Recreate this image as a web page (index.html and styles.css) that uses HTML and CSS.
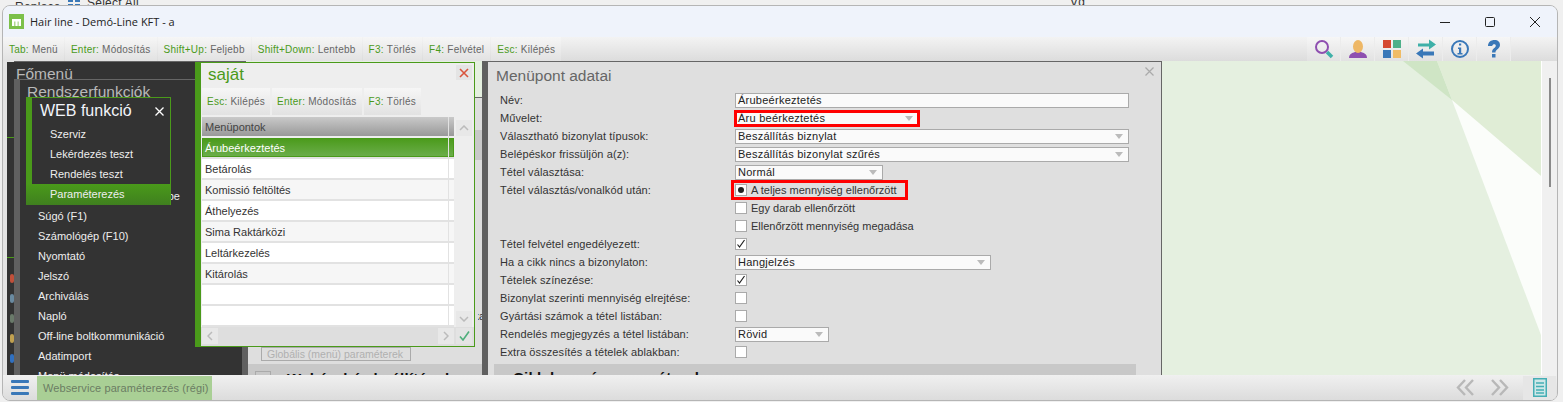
FILE: index.html
```html
<!DOCTYPE html>
<html lang="hu">
<head>
<meta charset="utf-8">
<title>Hair line - Demó-Line KFT - a</title>
<link rel="stylesheet" href="styles.css">
</head>
<body>
<div class="behind">
  <span class="b-replace">Replace</span>
  <svg class="b-grid" width="12" height="6" viewBox="0 0 12 6"><path d="M0 0h5v2H0zM7 0h5v2H7zM0 4h5v2H0zM7 4h5v2H7z" fill="#3a78b8"/></svg>
  <span class="b-select">Select All</span>
  <span class="b-vg">Vg</span>
</div>
<div class="window">
  <header class="titlebar">
    <svg class="logo" width="15" height="15" viewBox="0 0 15 15"><rect width="15" height="15" fill="#7cc04a"/><path d="M3 12V5h9v7h-2.500V7.500H8.700V12H6.300V7.500H5.400V12z" fill="#fff"/></svg>
    <span class="apptitle">Hair line - Demó-Line KFT - a</span>
    <div class="winctl">
      <svg width="10" height="10" viewBox="0 0 10 10"><path d="M0 5.500h10" stroke="#222" stroke-width="1"/></svg>
      <svg width="10" height="10" viewBox="0 0 10 10"><rect x=".5" y=".5" width="9" height="9" rx="1" fill="none" stroke="#222"/></svg>
      <svg width="10" height="10" viewBox="0 0 10 10"><path d="M0 0l10 10M10 0L0 10" stroke="#222"/></svg>
    </div>
  </header>
  <nav class="toolbar">
    <div class="keys">
      <span class="key"><b>Tab:</b> Menü</span>
      <span class="key"><b>Enter:</b> Módosítás</span>
      <span class="key"><b>Shift+Up:</b> Feljebb</span>
      <span class="key"><b>Shift+Down:</b> Lentebb</span>
      <span class="key"><b>F3:</b> Törlés</span>
      <span class="key"><b>F4:</b> Felvétel</span>
      <span class="key"><b>Esc:</b> Kilépés</span>
    </div>
    <div class="tools">
      <span class="tool"><svg width="20" height="20" viewBox="0 0 20 20"><circle cx="8" cy="8" r="6" fill="none" stroke="#8e4fb0" stroke-width="2"/><path d="M13 13l5 5" stroke="#3eb0a8" stroke-width="3.500"/></svg></span>
      <span class="tool"><svg width="20" height="20" viewBox="0 0 20 20"><path d="M1 19c0-4 3-5 6-6h6c3 1 6 2 6 6z" fill="#8e4fb0"/><ellipse cx="10" cy="7.500" rx="5" ry="6.500" fill="#eeb765"/></svg></span>
      <span class="tool"><svg width="20" height="20" viewBox="0 0 20 20"><rect x="1" y="1" width="8" height="8" fill="#d5482f"/><rect x="11" y="1" width="8" height="8" fill="#4fb08a"/><rect x="1" y="11" width="8" height="8" fill="#3a78b8"/><rect x="11" y="11" width="8" height="8" fill="#f0bc66"/></svg></span>
      <span class="tool"><svg width="20" height="20" viewBox="0 0 20 20"><path d="M2 5h11V1l7 5-7 5V8H2z" fill="#3eb0a8" transform="translate(0 -.5)"/><path d="M18 12H7V9L0 14l7 5v-3h11z" fill="#3a78b8" transform="translate(0 .5)"/></svg></span>
      <span class="tool"><svg width="20" height="20" viewBox="0 0 20 20"><circle cx="10" cy="10" r="8" fill="none" stroke="#3a78b8" stroke-width="2"/><path d="M9 4.500h2.200v2H9zM8 8.500h3.200V14H12.500v1.500h-5V14H9V10H8z" fill="#3a78b8"/></svg></span>
      <span class="tool"><svg width="20" height="20" viewBox="0 0 20 20"><path d="M4 7c0-4 3-6 6.500-6S16 3 16 6c0 4-4.500 4-4.500 7.500H8C8 9 12 9 11.800 6.500 11.500 4.500 8.500 4.800 8.200 7z" fill="#3a78b8"/><rect x="8" y="15" width="3.500" height="3.500" fill="#3a78b8"/></svg></span>
    </div>
  </nav>
  <main class="workspace">
    <div class="canvas">
      <svg class="pattern" width="1538" height="314" viewBox="0 0 1538 314" aria-hidden="true">
        <path d="M1400 0h34l15 39z" fill="#cfe5c5"/>
        <path d="M1434 0h104v115l-89-76z" fill="#e0edd6"/>
        <path d="M1449 39l89 76v159z" fill="#fbfdfa"/>
      </svg>

      <section class="panel-main"><h2 class="menu-head">Főmenü</h2></section>

      <div class="sidestrip">
        <i class="tick t1"></i><i class="tick t2"></i>
        <i class="dot d1"></i><i class="dot d2"></i><i class="dot d3"></i><i class="dot d4"></i><i class="dot d5"></i>
      </div>

      <section class="panel-sys">
        <h2 class="menu-head sys-head">Rendszerfunkciók</h2>
        <ul class="menu">
          <li>Felhasználói beállítások, típe</li>
          <li>Súgó (F1)</li>
          <li>Számológép (F10)</li>
          <li>Nyomtató</li>
          <li>Jelszó</li>
          <li>Archiválás</li>
          <li>Napló</li>
          <li>Off-line boltkommunikáció</li>
          <li>Adatimport</li>
          <li>Menü módosítás</li>
        </ul>
      </section>

      <section class="panel-params">
        <div class="params-top"></div>
        <div class="params-band"></div>
        <div class="params-rest"></div>
        <span class="ghost-btn">Globális (menü) paraméterek</span>
        <div class="params-bar"><i class="ghost-check"></i><b>Webáruház beállítások</b></div>
        <span class="params-ka">ka</span>
      </section>

      <section class="panel-web">
        <div class="web-head"><span>WEB funkció</span><svg width="9" height="9" viewBox="0 0 9 9"><path d="M.5.500l8 8M8.500.500l-8 8" stroke="#fff" stroke-width="1.300"/></svg></div>
        <ul class="web-menu">
          <li>Szerviz</li>
          <li>Lekérdezés teszt</li>
          <li>Rendelés teszt</li>
          <li class="on">Paraméterezés</li>
        </ul>
      </section>

      <section class="panel-own">
        <div class="own-head"><span>saját</span><span class="own-close"><svg width="10" height="10" viewBox="0 0 10 10"><path d="M1 1l8 8M9 1l-8 8" stroke="#d9543c" stroke-width="1.600"/></svg></span></div>
        <div class="own-keys">
          <span class="key"><b>Esc:</b> Kilépés</span>
          <span class="key"><b>Enter:</b> Módosítás</span>
          <span class="key"><b>F3:</b> Törlés</span>
        </div>
        <div class="own-body">
          <div class="list">
            <div class="row head"><span>Menüpontok</span></div>
            <div class="row on"><span>Árubeérkeztetés</span></div>
            <div class="row"><span>Betárolás</span></div>
            <div class="row alt"><span>Komissió feltöltés</span></div>
            <div class="row"><span>Áthelyezés</span></div>
            <div class="row alt"><span>Sima Raktárközi</span></div>
            <div class="row"><span>Leltárkezelés</span></div>
            <div class="row alt"><span>Kitárolás</span></div>
            <div class="row"><span></span></div>
            <div class="row"><span></span></div>
          </div>
          <div class="vtrack">
            <span class="arrowbtn"><svg width="10" height="6" viewBox="0 0 10 6"><path d="M1 5l4-4 4 4" fill="none" stroke="#bbb" stroke-width="1.500"/></svg></span>
            <span class="arrowbtn"><svg width="10" height="6" viewBox="0 0 10 6"><path d="M1 1l4 4 4-4" fill="none" stroke="#bbb" stroke-width="1.500"/></svg></span>
          </div>
        </div>
        <div class="own-foot">
          <span class="arrowbtn"><svg width="6" height="10" viewBox="0 0 6 10"><path d="M5 1L1 5l4 4" fill="none" stroke="#bbb" stroke-width="1.500"/></svg></span>
          <span class="arrowbtn push"><svg width="6" height="10" viewBox="0 0 6 10"><path d="M1 1l4 4-4 4" fill="none" stroke="#bbb" stroke-width="1.500"/></svg></span>
          <span class="arrowbtn ok"><svg width="11" height="10" viewBox="0 0 11 10"><path d="M1 5.500l3 3.500 6-8.500" fill="none" stroke="#4fae7c" stroke-width="1.600"/></svg></span>
        </div>
      </section>

      <section class="panel-detail">
        <div class="detail-head"><h2>Menüpont adatai</h2><svg width="9" height="9" viewBox="0 0 9 9"><path d="M.5.500l8 8M8.500.500l-8 8" stroke="#aaa" stroke-width="1.200"/></svg></div>
        <div class="form">
          <label>Név:</label><div class="field full">Árubeérkeztetés</div>
          <label>Művelet:</label><div class="field sel w184 flag">Áru beérkeztetés</div>
          <label>Választható bizonylat típusok:</label><div class="field sel full">Beszállítás biznylat</div>
          <label>Belépéskor frissüljön a(z):</label><div class="field sel full">Beszállítás bizonylat szűrés</div>
          <label>Tétel választása:</label><div class="field sel w148">Normál</div>
          <label>Tétel választás/vonalkód után:</label><div class="opt flag-opt"><i class="box radio"></i>A teljes mennyiség ellenőrzött</div>
          <label></label><div class="opt"><i class="box"></i>Egy darab ellenőrzött</div>
          <label></label><div class="opt"><i class="box"></i>Ellenőrzött mennyiség megadása</div>
          <label>Tétel felvétel engedélyezett:</label><div class="opt"><i class="box checked"><svg width="10" height="10" viewBox="0 0 10 10"><path d="M1.500 5.500l2 2.500 5-7" fill="none" stroke="#222" stroke-width="1.200"/></svg></i></div>
          <label>Ha a cikk nincs a bizonylaton:</label><div class="field sel w256">Hangjelzés</div>
          <label>Tételek színezése:</label><div class="opt"><i class="box checked"><svg width="10" height="10" viewBox="0 0 10 10"><path d="M1.500 5.500l2 2.500 5-7" fill="none" stroke="#222" stroke-width="1.200"/></svg></i></div>
          <label>Bizonylat szerinti mennyiség elrejtése:</label><div class="opt"><i class="box"></i></div>
          <label>Gyártási számok a tétel listában:</label><div class="opt"><i class="box"></i></div>
          <label>Rendelés megjegyzés a tétel listában:</label><div class="field sel w94">Rövid</div>
          <label>Extra összesítés a tételek ablakban:</label><div class="opt"><i class="box"></i></div>
        </div>
        <div class="detail-bar"><b>Cikk lapozás paraméterek</b></div>
      </section>
    </div>
    <div class="vscroll"><i class="thumb"></i></div>
  </main>
  <footer class="statusbar">
    <span class="burger"><i></i><i></i><i></i></span>
    <span class="tab">Webservice paraméterezés (régi)</span>
    <div class="nav">
      <svg width="19" height="17" viewBox="0 0 19 17"><path d="M9 1L2 8.500 9 16M17 1l-7 7.500 7 7.500" fill="none" stroke="#b8b8b8" stroke-width="2.400"/></svg>
      <svg width="19" height="17" viewBox="0 0 19 17"><path d="M2 1l7 7.500L2 16M10 1l7 7.500-7 7.500" fill="none" stroke="#b8b8b8" stroke-width="2.400"/></svg>
      <span class="docbtn"><svg width="14" height="19" viewBox="0 0 14 19"><rect x=".75" y=".75" width="12.500" height="17.500" fill="#cfe8e8" stroke="#45aeb4" stroke-width="1.500"/><path d="M3 5h8M3 8.500h8M3 12h8M3 15h8" stroke="#45aeb4" stroke-width="1.300"/></svg></span>
    </div>
  </footer>
</div>
</body>
</html>
```
FILE: styles.css
```css
*, *::before, *::after { box-sizing: border-box; }
html, body { margin: 0; height: 100%; }
body {
  position: relative;
  width: 1563px;
  height: 402px;
  overflow: hidden;
  background: #f0f0f0;
  font-family: "Liberation Sans", Arial, sans-serif;
  font-size: 11px;
  letter-spacing: .25px;
}
ul { list-style: none; margin: 0; padding: 0; }
h2 { margin: 0; font-weight: 400; }
i { display: block; }

/* things peeking out from the application behind the window */
.behind { position: absolute; inset: 0 0 auto 0; height: 6px; overflow: hidden; color: #333; font-size: 12px; }
.b-replace, .b-select, .b-vg, .b-grid { position: absolute; }
.b-replace { left: 15px; top: 0; }
.b-grid { left: 68px; top: 0; }
.b-select { left: 87px; top: -4px; }
.b-vg { left: 1070px; top: -5px; }

.window {
  position: absolute;
  left: 2px;
  top: 5px;
  width: 1556px;
  height: 396px;
  display: flex;
  flex-direction: column;
  overflow: hidden;
  border: 1px solid #b5b5b5;
  border-radius: 8px;
  background: #f0f0f0;
}

.titlebar {
  flex: 0 0 31px;
  display: flex;
  align-items: center;
  padding-left: 6px;
  background: #eff3fb;
}
.logo { margin-top: -1px; }
.apptitle {
  margin-left: 6px;
  font-family: "Open Sans", sans-serif;
  font-size: 11px;
  letter-spacing: 0;
  color: #222;
}
.winctl { margin-left: auto; margin-right: 17px; display: flex; gap: 35px; }

.toolbar {
  flex: 0 0 24px;
  display: flex;
  justify-content: space-between;
  background: linear-gradient(#f3f3f3, #dcdcdc);
  padding-right: 46px;
}
.keys, .tools { display: flex; gap: 1px; }
.key {
  display: flex;
  align-items: center;
  gap: 3px;
  padding: 0 6px;
  background: linear-gradient(#f6f6f6, #e2e2e2);
  color: #666;
  font-size: 10px;
  white-space: nowrap;
}
.key b { font-weight: 400; color: #4a9a1a; }
.tools { gap: 0; }
.tool {
  width: 34px;
  display: flex;
  align-items: center;
  justify-content: center;
  background: linear-gradient(#f6f6f6, #e2e2e2);
  border-right: 1px solid #ececec;
}

.workspace { flex: 1; display: flex; min-height: 0; }
.canvas { position: relative; flex: 0 0 1538px; overflow: hidden; background: #e5f0e0; }
.pattern { position: absolute; left: 0; top: 0; }
.vscroll { flex: 1; position: relative; background: #f0f0f0; border-left: 1px solid #fff; display: flex; justify-content: center; padding-top: 17px; }
.thumb { width: 2px; height: 109px; background: #8a8a8a; }

.sidestrip { position: absolute; left: 0; top: 0; width: 11px; height: 314px; background: #333; border-left: 4px solid #e4e4e4; border-top: 1px solid #e4e4e4; }
.tick { position: absolute; left: 0; width: 7px; height: 1px; background: #4a9a1a; }
.t1 { top: 75px; }
.t2 { top: 195px; }
.dot { position: absolute; left: 3px; width: 4px; height: 9px; border-radius: 2px; }
.d1 { top: 212px; background: #c0503a; }
.d2 { top: 232px; background: #6a8aa0; }
.d3 { top: 252px; background: #6a7a6a; }
.d4 { top: 272px; background: #c0a050; }
.d5 { top: 292px; background: #3070c0; }

.panel-main { position: absolute; left: 4px; top: 0; width: 239px; height: 314px; background: #333; border-top: 1px solid #666; padding: 3px 0 0 9px; }
.menu-head { font-size: 15.500px; line-height: 18px; color: #b9b9b9; letter-spacing: 0; }
.panel-sys { position: absolute; left: 11px; top: 18px; width: 231px; height: 296px; background: #333; border-top: 1px solid #666; border-left: 6px solid #606060; }
.sys-head { height: 106px; padding: 3px 0 0 7px; }
.menu { padding-left: 18px; color: #eee; letter-spacing: 0; }
.menu li { height: 20px; line-height: 20px; white-space: nowrap; }

.panel-web { position: absolute; left: 23px; top: 36px; width: 145px; height: 108px; background: #333; border: 1px solid #4a9a1a; border-left-width: 6px; }
.web-head { height: 26px; display: flex; justify-content: space-between; align-items: center; padding: 0 6px 0 8px; color: #f2f5fa; font-size: 16px; letter-spacing: 0; }
.web-menu { margin-top: 0; color: #eee; letter-spacing: 0; }
.web-menu li { height: 20px; line-height: 20px; padding-left: 18px; }
.web-menu li.on { height: 21px; margin-left: -6px; padding-left: 24px; background: linear-gradient(#4a9a1a, #3f7f1f); }

.panel-params { position: absolute; left: 239px; top: 36px; width: 243px; height: 278px; border-left: 6px solid #606060; border-top: 1px solid #666; background: #dedede; overflow: hidden; }
.params-top { height: 32px; }
.params-band { height: 30px; background: #c8c8c8; }
.params-rest { height: 187px; }
.ghost-btn { display: block; width: 150px; height: 14px; margin-left: 13px; border: 1px solid #aaa; line-height: 12px; padding-left: 5px; color: #b0b0b0; font-size: 10.500px; letter-spacing: 0; white-space: nowrap; }
.params-bar { display: flex; gap: 16px; align-items: flex-start; height: 13px; margin-top: 3px; margin-left: 0; background: #c8c8c8; padding: 7px 0 0 7px; font-size: 15px; line-height: 16px; color: #111; white-space: nowrap; overflow: hidden; }
.ghost-check { width: 16px; height: 14px; border: 1px solid #aaa; flex: none; }
.params-ka { position: absolute; right: 0; top: 212px; width: 7px; overflow: hidden; direction: rtl; color: #333; letter-spacing: 0; }

.panel-own { position: absolute; left: 192px; top: 1px; width: 280px; height: 285px; background: #eee; border: 1px solid #4a9a1a; border-left-width: 6px; display: flex; flex-direction: column; }
.own-head { height: 25px; display: flex; justify-content: space-between; padding: 2px 2px 0 7px; color: #4a9a1a; font-size: 17px; letter-spacing: 0; }
.own-close { width: 16px; height: 15px; display: flex; align-items: center; justify-content: center; background: #e4e4e4; }
.own-keys { height: 27px; display: flex; gap: 2px; margin-left: 1px; }
.own-keys .key { padding: 0 5px; }
.own-body { display: flex; margin-top: 2px; height: 210px; }
.list { width: 253px; padding-left: 1px; }
.row { height: 21px; display: flex; align-items: center; padding-left: 3px; border-bottom: 2px solid #e2e2e2; background: #fff; color: #333; font-size: 11px; letter-spacing: 0; position: relative; }
.row::after { content: ""; position: absolute; right: 5px; top: 0; bottom: -2px; width: 1px; background: #e2e2e2; }
.row.alt { background: #f6f6f6; }
.row.head { background: linear-gradient(#c9c9c9, #999); color: #444; border-bottom-color: #eee; }
.row.on { background: linear-gradient(#4a9a1a, #6cae4c); color: #fff; border-bottom-color: #e2e2e2; box-shadow: inset 0 0 0 1px #4a9a1a; }
.vtrack { flex: 1; display: flex; flex-direction: column; justify-content: space-between; align-items: center; padding: 3px 0 0; }
.arrowbtn { width: 16px; height: 16px; flex: none; display: flex; align-items: center; justify-content: center; background: #e8e8e8; }
.own-foot { flex: 1; display: flex; align-items: flex-start; padding: 1px 2px 0 1px; background: #dedede; }
.push { margin-left: auto; margin-right: 2px; }
.ok { background: #e4e4e4; }

.panel-detail { position: absolute; left: 479px; top: 0; width: 680px; height: 314px; background: #dfdfdf; border-top: 1px solid #666; border-left: 6px solid #606060; border-right: 1px solid #666; overflow: hidden; }
.detail-head { height: 29px; display: flex; justify-content: space-between; padding: 5px 7px 0 8px; }
.detail-head h2 { font-size: 15.500px; line-height: 18px; color: #666; letter-spacing: 0; }
.form { display: grid; grid-template-columns: 241px 1fr; grid-auto-rows: 18px; align-items: center; padding-left: 6px; color: #333; }
.form label { padding-left: 6px; white-space: nowrap; letter-spacing: .1px; }
.field { position: relative; height: 15px; line-height: 13px; padding-left: 2px; background: #fafafa; border: 1px solid #aaa; color: #222; white-space: nowrap; }
.full { width: 394px; }
.w184 { width: 184px; }
.w148 { width: 148px; }
.w256 { width: 256px; }
.w94 { width: 94px; }
.sel::after { content: ""; position: absolute; right: 5px; top: 4px; border: 4px solid transparent; border-top: 5px solid #bbb; border-bottom: 0; width: 8px; height: 5px; }
.flag { outline: 3px solid #f00; outline-offset: -2px; }
.opt { display: flex; align-items: center; gap: 4px; height: 18px; color: #333; white-space: nowrap; letter-spacing: 0; }
.flag-opt { position: relative; }
.flag-opt::before { content: ""; position: absolute; left: -4px; top: -1px; width: 177px; height: 20px; border: 3px solid #f00; }
.box { width: 12px; height: 12px; flex: none; background: #fff; border: 1px solid #aaa; display: flex; align-items: center; justify-content: center; }
.radio::before { content: ""; width: 6px; height: 6px; border-radius: 50%; background: #222; }
.detail-bar { height: 11px; margin-top: 3px; margin-left: 6px; width: 642px; background: #c8c8c8; padding: 6px 0 0 19px; font-size: 15px; line-height: 16px; color: #111; white-space: nowrap; overflow: hidden; }

.statusbar {
  flex: 0 0 25px;
  display: flex;
  align-items: stretch;
  padding-left: 8px;
  background: linear-gradient(#f0f0f0, #dcdcdc);
}
.burger { width: 18px; display: flex; flex-direction: column; justify-content: center; gap: 3px; }
.burger i { height: 3px; border-radius: 1px; background: #3a78b8; }
.tab { margin-left: 8px; margin-top: 1px; width: 175px; padding-left: 6px; line-height: 24px; background: #a9cf95; color: #6b7d63; white-space: nowrap; letter-spacing: .1px; }
.nav { margin-left: auto; display: flex; align-items: center; gap: 15px; padding-right: 1px; }
.docbtn { width: 33px; height: 24px; display: flex; align-items: center; justify-content: center; background: #e6e6e6; margin-left: -1px; }
```
